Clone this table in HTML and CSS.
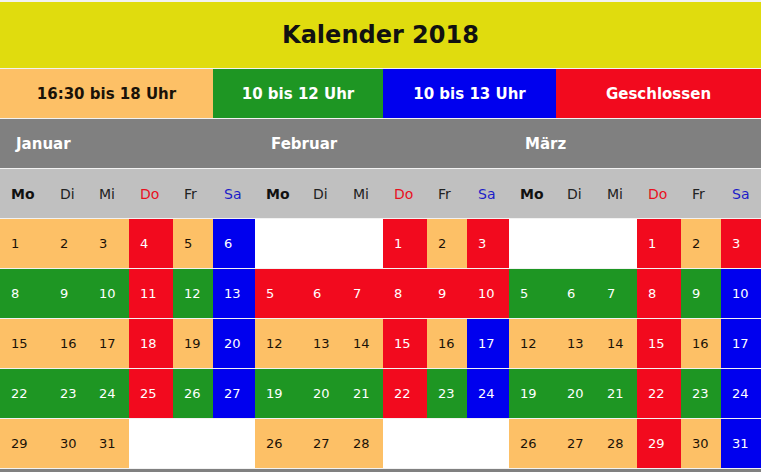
FILE: index.html
```html
<!DOCTYPE html>
<html lang="de">
<head>
<meta charset="utf-8">
<title>Kalender 2018</title>
<link rel="stylesheet" href="styles.css">
</head>
<body>
<div class="cal">
  <div class="title">Kalender 2018</div>

  <div class="leg span5 o">16:30 bis 18 Uhr</div>
  <div class="leg span4 g">10 bis 12 Uhr</div>
  <div class="leg span4 b">10 bis 13 Uhr</div>
  <div class="leg span5 r">Geschlossen</div>

  <div class="month">Januar</div>
  <div class="month">Februar</div>
  <div class="month">März</div>

  <div class="day mo">Mo</div><div class="day">Di</div><div class="day">Mi</div><div class="day do">Do</div><div class="day">Fr</div><div class="day sa">Sa</div>
  <div class="day mo">Mo</div><div class="day">Di</div><div class="day">Mi</div><div class="day do">Do</div><div class="day">Fr</div><div class="day sa">Sa</div>
  <div class="day mo">Mo</div><div class="day">Di</div><div class="day">Mi</div><div class="day do">Do</div><div class="day">Fr</div><div class="day sa">Sa</div>

  <!-- row 1 -->
  <div class="d o">1</div><div class="d o">2</div><div class="d o">3</div><div class="d r">4</div><div class="d o">5</div><div class="d b">6</div>
  <div class="d w"></div><div class="d w"></div><div class="d w"></div><div class="d r">1</div><div class="d o">2</div><div class="d r">3</div>
  <div class="d w"></div><div class="d w"></div><div class="d w"></div><div class="d r">1</div><div class="d o">2</div><div class="d r">3</div>

  <!-- row 2 -->
  <div class="d g">8</div><div class="d g">9</div><div class="d g">10</div><div class="d r">11</div><div class="d g">12</div><div class="d b">13</div>
  <div class="d r">5</div><div class="d r">6</div><div class="d r">7</div><div class="d r">8</div><div class="d r">9</div><div class="d r">10</div>
  <div class="d g">5</div><div class="d g">6</div><div class="d g">7</div><div class="d r">8</div><div class="d g">9</div><div class="d b">10</div>

  <!-- row 3 -->
  <div class="d o">15</div><div class="d o">16</div><div class="d o">17</div><div class="d r">18</div><div class="d o">19</div><div class="d b">20</div>
  <div class="d o">12</div><div class="d o">13</div><div class="d o">14</div><div class="d r">15</div><div class="d o">16</div><div class="d b">17</div>
  <div class="d o">12</div><div class="d o">13</div><div class="d o">14</div><div class="d r">15</div><div class="d o">16</div><div class="d b">17</div>

  <!-- row 4 -->
  <div class="d g">22</div><div class="d g">23</div><div class="d g">24</div><div class="d r">25</div><div class="d g">26</div><div class="d b">27</div>
  <div class="d g">19</div><div class="d g">20</div><div class="d g">21</div><div class="d r">22</div><div class="d g">23</div><div class="d b">24</div>
  <div class="d g">19</div><div class="d g">20</div><div class="d g">21</div><div class="d r">22</div><div class="d g">23</div><div class="d b">24</div>

  <!-- row 5 -->
  <div class="d o">29</div><div class="d o">30</div><div class="d o">31</div><div class="d w"></div><div class="d w"></div><div class="d w"></div>
  <div class="d o">26</div><div class="d o">27</div><div class="d o">28</div><div class="d w"></div><div class="d w"></div><div class="d w"></div>
  <div class="d o">26</div><div class="d o">27</div><div class="d o">28</div><div class="d r">29</div><div class="d o">30</div><div class="d b">31</div>

  <div class="next"></div>
</div>
</body>
</html>
```

FILE: styles.css
```css
html, body {
  margin: 0;
  padding: 0;
  background: #ffffff;
}

body {
  font-family: "DejaVu Sans", Verdana, sans-serif;
  color: #111111;
}

.cal {
  display: grid;
  width: 761px;
  grid-template-columns:
    49px 39px 41px 44px 40px 42px
    47px 40px 41px 44px 40px 42px
    47px 40px 41px 44px 40px 40px;
  grid-template-rows: 68px repeat(8, 50px) 4px;
  background: #f2f2f2;
}

.cal > div {
  box-sizing: border-box;
  border-top: 1px solid #f2f2f2;
  display: flex;
  align-items: center;
  min-height: 0;
}

.cal > .title {
  grid-column: 1 / -1;
  border-top-width: 2px;
  background: #e0dc0e;
  justify-content: center;
  font-size: 24px;
  font-weight: bold;
  color: #111111;
  padding-bottom: 1px;
}

.leg {
  justify-content: center;
  font-size: 15px;
  font-weight: bold;
  color: #ffffff;
}

.leg.o {
  color: #1a1208;
}

.span5 { grid-column: span 5; }
.span4 { grid-column: span 4; }

.month {
  grid-column: span 6;
  background: #808080;
  color: #ffffff;
  font-size: 15px;
  font-weight: bold;
  padding-left: 16px;
}

.day {
  background: #c0c0c0;
  font-size: 14px;
  color: #222222;
  padding-left: 11px;
}

.day.mo {
  font-weight: bold;
  color: #111111;
}

.day.do { color: #e8101e; }
.day.sa { color: #1c1cc8; }

.d {
  font-size: 13px;
  padding-left: 11px;
  color: #ffffff;
}

.o { background: #fdc066; }
.g { background: #1e9623; }
.r { background: #f20a1e; }
.b { background: #0000ee; }
.w { background: #ffffff; }

.d.o { color: #1a1208; }

.cal > .next {
  grid-column: 1 / -1;
  background: #808080;
}
```
